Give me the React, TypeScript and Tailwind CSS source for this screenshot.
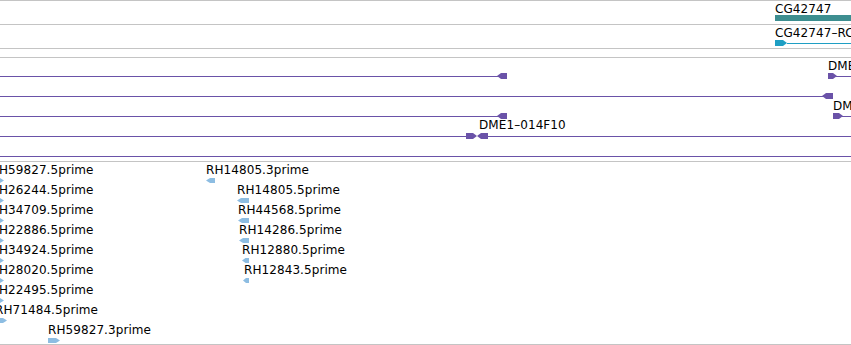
import React from "react";

const PURPLE = "#6a52a8";
const EST = "#8dbde2";

type Glyph = { x0: number; x1: number; dir: "L" | "R" };

function glyphPoints(g: Glyph, top: number, bot: number) {
  const c = (top + bot) / 2;
  const t = Math.min(4, (g.x1 - g.x0) / 2);
  if (g.dir === "R") {
    return `${g.x0},${top} ${g.x1 - t},${top} ${g.x1},${c} ${g.x1 - t},${bot} ${g.x0},${bot}`;
  }
  return `${g.x0},${c} ${g.x0 + t},${top} ${g.x1},${top} ${g.x1},${bot} ${g.x0 + t},${bot}`;
}

const purpleRows: { lines: [number, number][]; glyphs: Glyph[] }[] = [
  { lines: [[0, 500], [836, 851]], glyphs: [{ x0: 497, x1: 507, dir: "L" }, { x0: 828, x1: 837, dir: "R" }] },
  { lines: [[0, 826]], glyphs: [{ x0: 822, x1: 833, dir: "L" }] },
  { lines: [[0, 500], [842, 851]], glyphs: [{ x0: 497, x1: 507, dir: "L" }, { x0: 833, x1: 843, dir: "R" }] },
  { lines: [[0, 470], [485, 851]], glyphs: [{ x0: 466, x1: 477, dir: "R" }, { x0: 477, x1: 488, dir: "L" }] },
  { lines: [[0, 851]], glyphs: [] },
];

const estItems: { label: string; left: number; row: number; g: Glyph }[] = [
  { label: "RH59827.5prime", left: -9.5, row: 0, g: { x0: -8, x1: 4, dir: "R" } },
  { label: "RH26244.5prime", left: -9.5, row: 1, g: { x0: -8, x1: 4, dir: "R" } },
  { label: "RH34709.5prime", left: -9.5, row: 2, g: { x0: -8, x1: 4, dir: "R" } },
  { label: "RH22886.5prime", left: -9.5, row: 3, g: { x0: -8, x1: 4, dir: "R" } },
  { label: "RH34924.5prime", left: -9.5, row: 4, g: { x0: -8, x1: 4, dir: "R" } },
  { label: "RH28020.5prime", left: -9.5, row: 5, g: { x0: -8, x1: 4, dir: "R" } },
  { label: "RH22495.5prime", left: -9.5, row: 6, g: { x0: -8, x1: 4, dir: "R" } },
  { label: "RH71484.5prime", left: -5, row: 7, g: { x0: -5, x1: 7, dir: "R" } },
  { label: "RH59827.3prime", left: 48, row: 8, g: { x0: 48, x1: 60, dir: "R" } },
  { label: "RH14805.3prime", left: 206, row: 0, g: { x0: 206, x1: 215, dir: "L" } },
  { label: "RH14805.5prime", left: 237, row: 1, g: { x0: 237, x1: 249, dir: "L" } },
  { label: "RH44568.5prime", left: 238, row: 2, g: { x0: 238, x1: 249, dir: "L" } },
  { label: "RH14286.5prime", left: 239, row: 3, g: { x0: 239, x1: 249, dir: "L" } },
  { label: "RH12880.5prime", left: 242, row: 4, g: { x0: 242, x1: 249, dir: "L" } },
  { label: "RH12843.5prime", left: 244, row: 5, g: { x0: 243, x1: 249, dir: "L" } },
];

function Label({ text, left, top }: { text: string; left: number; top: number }) {
  return (
    <span className="absolute whitespace-nowrap" style={{ left, top }}>
      {text}
    </span>
  );
}

export default function App() {
  return (
    <div className="w-[851px] h-[345px] bg-white overflow-hidden font-['DejaVu_Sans',sans-serif] text-[12px] leading-[14px] tracking-[0.08px] text-black">
      {/* Gene track */}
      <div className="relative h-[24px] border-t border-[#c4c4c4]">
        <Label text="CG42747" left={775} top={1} />
        <div className="absolute left-[775px] top-[14px] h-[6px] w-[76px] bg-[#3d8e90]" />
      </div>

      {/* Transcript track */}
      <div className="relative h-[24px] border-t border-[#c4c4c4]">
        <Label text="CG42747–RC" left={775} top={1} />
        <svg className="absolute left-0 top-0" width={851} height={23}>
          <rect x={787} y={18} width={64} height={1} fill="#1e9fc4" />
          <polygon points={glyphPoints({ x0: 775, x1: 787, dir: "R" }, 15, 21)} fill="#1e9fc4" />
        </svg>
      </div>

      {/* Empty track */}
      <div className="h-[9px] border-t border-[#c4c4c4]" />

      {/* Purple track */}
      <div className="relative h-[104px] border-t border-[#c4c4c4]">
        <svg className="absolute left-0 top-0" width={851} height={103}>
          {purpleRows.map((r, i) => {
            const y = 18 + i * 20;
            return (
              <g key={i}>
                {r.lines.map(([a, b], j) => (
                  <rect key={j} x={a} y={y} width={b - a} height={1} fill={PURPLE} />
                ))}
                {r.glyphs.map((g, j) => (
                  <polygon key={j} points={glyphPoints(g, y - 3, y + 3)} fill={PURPLE} />
                ))}
              </g>
            );
          })}
        </svg>
        <Label text="DME" left={828} top={1} />
        <Label text="DM" left={833} top={41} />
        <Label text="DME1–014F10" left={479} top={60} />
      </div>

      {/* EST track */}
      <div className="relative h-[184px] border-t border-b border-[#c4c4c4]">
        <svg className="absolute left-0 top-0" width={851} height={182}>
          {estItems.map((e, i) => {
            const top = 16 + e.row * 20;
            return <polygon key={i} points={glyphPoints(e.g, top, top + 5)} fill={EST} />;
          })}
        </svg>
        {estItems.map((e, i) => (
          <Label key={i} text={e.label} left={e.left} top={1 + e.row * 20} />
        ))}
      </div>
    </div>
  );
}
